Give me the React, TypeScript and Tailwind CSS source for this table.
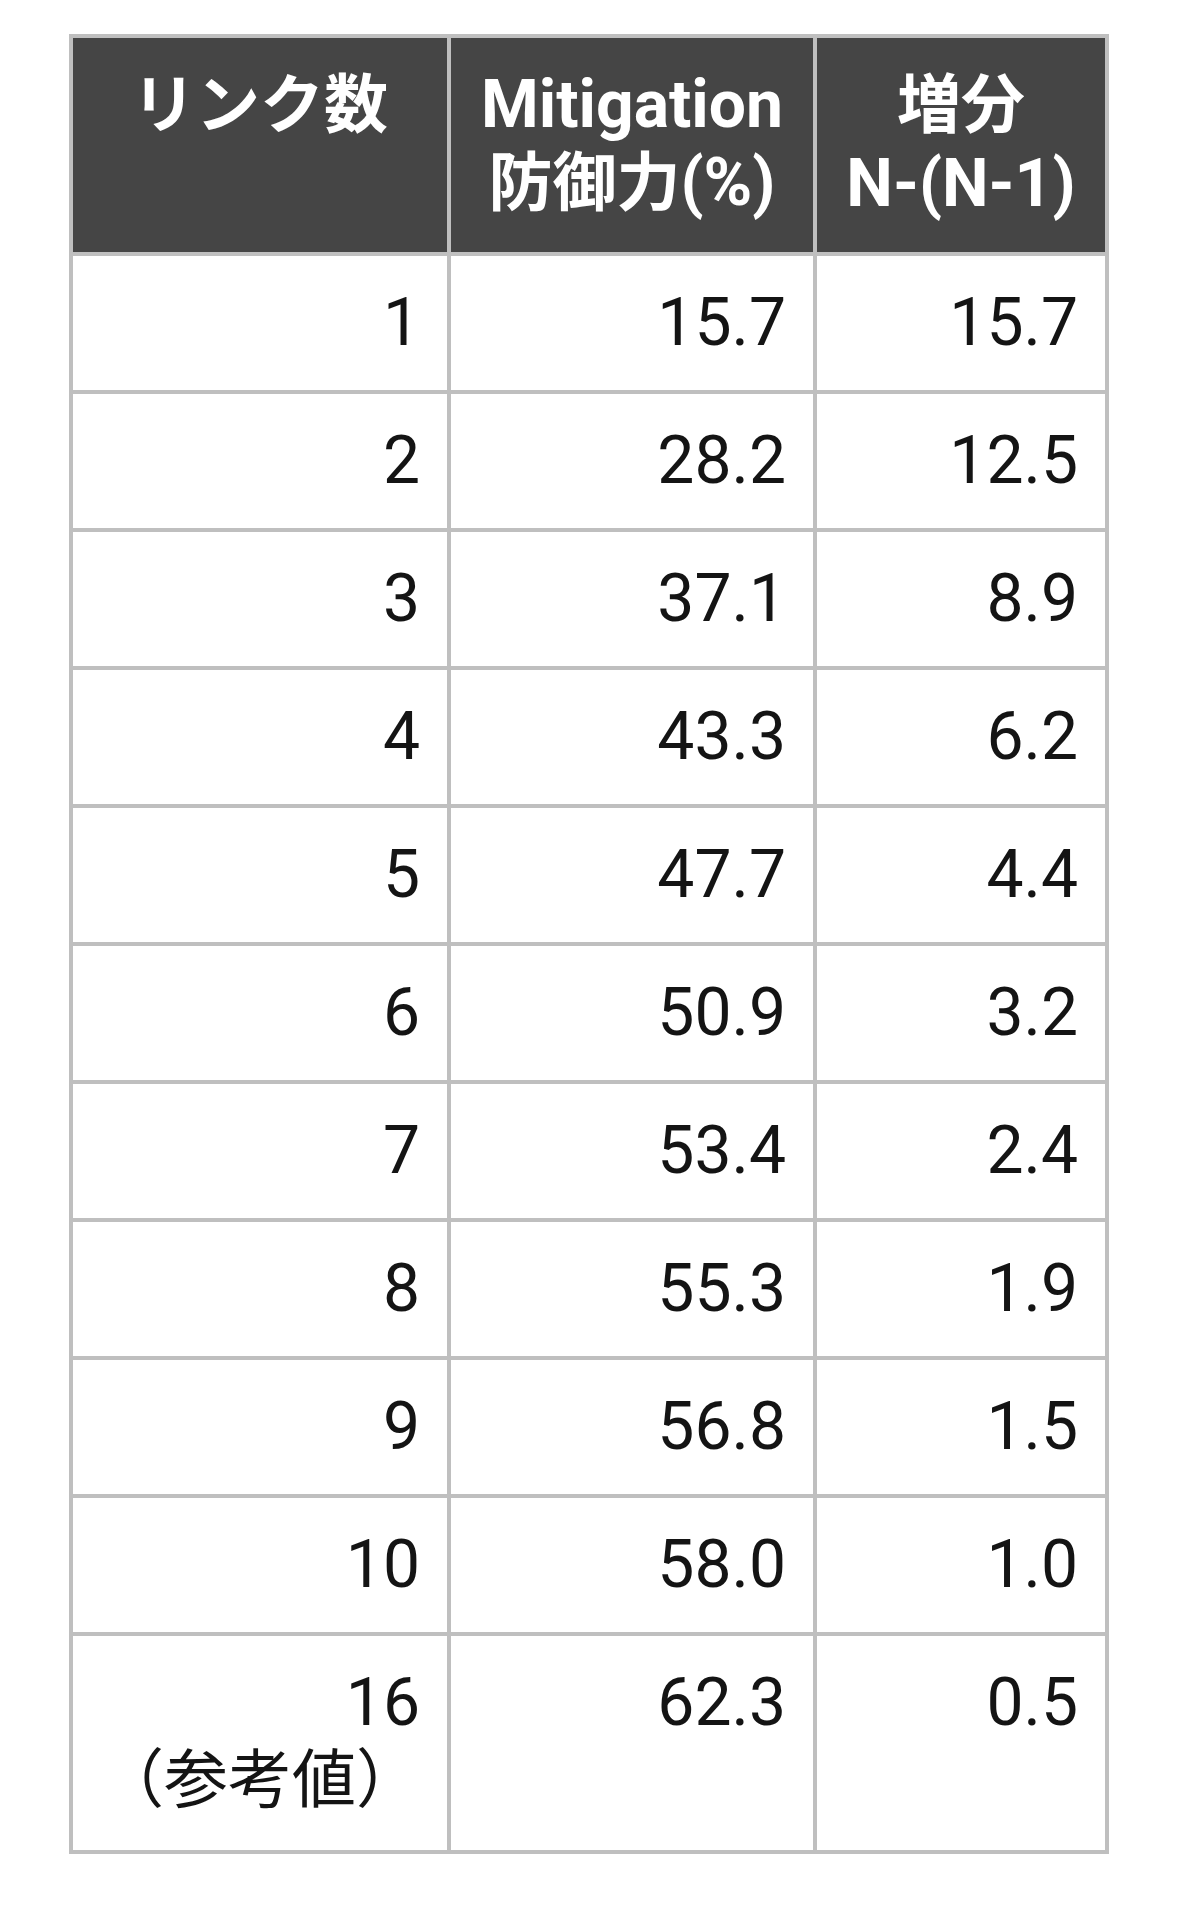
import React from 'react';

type Row = { links: string; note?: string; mitigation: string; delta: string };

const rows: Row[] = [
    { links: '1', mitigation: '15.7', delta: '15.7' },
    { links: '2', mitigation: '28.2', delta: '12.5' },
    { links: '3', mitigation: '37.1', delta: '8.9' },
    { links: '4', mitigation: '43.3', delta: '6.2' },
    { links: '5', mitigation: '47.7', delta: '4.4' },
    { links: '6', mitigation: '50.9', delta: '3.2' },
    { links: '7', mitigation: '53.4', delta: '2.4' },
    { links: '8', mitigation: '55.3', delta: '1.9' },
    { links: '9', mitigation: '56.8', delta: '1.5' },
    { links: '10', mitigation: '58.0', delta: '1.0' },
    { links: '16', note: '（参考値）', mitigation: '62.3', delta: '0.5' },
];

const headCell = 'bg-[#454545] text-white font-bold text-center pt-[28px] pb-[29px] px-[12px]';
const bodyCell = 'bg-white text-[#141414] text-right pt-[28px] pr-[27px] pl-[12px]';

const App: React.FC = () => {
    return (
        <div className="min-h-screen bg-white pt-[34px] pl-[69px] font-['Roboto','Noto_Sans_CJK_JP',sans-serif] text-[66px] leading-[78px]">
            <div className="grid w-[1040px] grid-cols-[374px_362px_288px] gap-[4px] p-[4px] bg-[#bfbfbf]">
                {/* header */}
                <div className={headCell}>
                    <span className="text-[64px]">リンク数</span>
                </div>
                <div className={headCell}>
                    <div>Mitigation</div>
                    <div><span className="text-[64px]">防御力</span>(%)</div>
                </div>
                <div className={headCell}>
                    <div><span className="text-[64px]">増分</span></div>
                    <div>N-(N-1)</div>
                </div>

                {rows.map(r => {
                    // the reference row is a bit taller
                    const pad = r.note ? 'pb-[30px]' : 'pb-[28px]';
                    return (
                        <React.Fragment key={r.links}>
                            <div className={`${bodyCell} ${pad}`}>
                                <div>{r.links}</div>
                                {r.note && <div className="text-[64px]">{r.note}</div>}
                            </div>
                            <div className={`${bodyCell} ${pad}`}>{r.mitigation}</div>
                            <div className={`${bodyCell} ${pad}`}>{r.delta}</div>
                        </React.Fragment>
                    );
                })}
            </div>
        </div>
    );
};

export default App;
